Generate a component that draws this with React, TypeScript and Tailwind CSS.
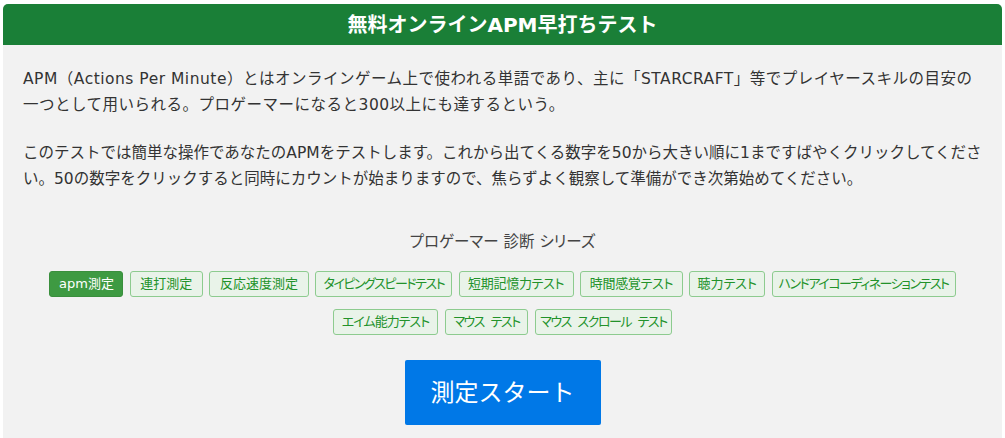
import React from "react";

type Test = { label: string; cls: string };

const row1: Test[] = [
  { label: "apm測定", cls: "w-[74px]" },
  { label: "連打測定", cls: "w-[73px]" },
  { label: "反応速度測定", cls: "w-[100px]" },
  { label: "タイピングスピードテスト", cls: "w-[137px] tracking-[-1.5px]" },
  { label: "短期記憶力テスト", cls: "w-[115px] tracking-[-0.3px]" },
  { label: "時間感覚テスト", cls: "w-[103px] tracking-[-0.3px]" },
  { label: "聴力テスト", cls: "w-[76px]" },
  { label: "ハンドアイコーディネーションテスト", cls: "w-[184px] tracking-[-1.5px]" },
];

const row2: Test[] = [
  { label: "エイム能力テスト", cls: "w-[105px] tracking-[-1px]" },
  { label: "マウス テスト", cls: "w-[83px] tracking-[-1.5px]" },
  { label: "マウス スクロール テスト", cls: "w-[137px] tracking-[-1.5px]" },
];

function TestButton({ test, active }: { test: Test; active?: boolean }) {
  return (
    <button
      className={`${test.cls} h-[26px] shrink-0 whitespace-nowrap rounded-[3px] border text-center text-[13px] leading-[18px] [word-spacing:4px] ${
        active
          ? "border-[#3a8f3d] bg-[#3e9a42] text-white"
          : "border-[#8dcb8f] bg-[#e9f3e9] text-[#22922a]"
      }`}
    >
      {test.label}
    </button>
  );
}

export default function App() {
  return (
    <div
      className="min-h-[438px] bg-white px-[3px] pt-1"
      style={{ fontFamily: '"DejaVu Sans", "Noto Sans CJK JP", sans-serif' }}
    >
      <div className="overflow-hidden rounded-t-[5px] bg-[#f2f2f2] min-h-[434px]">
        <h1 className="flex h-[41px] items-center justify-center bg-[#1a7f37] text-[20px] font-bold text-white">
          無料オンラインAPM早打ちテスト
        </h1>

        <div className="px-5 pt-[21px] text-[15.5px] leading-[26px] text-[#333]">
          <p className="tracking-[0.5px]">
            APM（Actions Per Minute）とはオンラインゲーム上で使われる単語であり、主に「STARCRAFT」等でプレイヤースキルの目安の
            <br />
            一つとして用いられる。プロゲーマーになると300以上にも達するという。
          </p>
          <p className="mt-[22px]">
            このテストでは簡単な操作であなたのAPMをテストします。これから出てくる数字を50から大きい順に1まですばやくクリックしてください。50の数字をクリックすると同時にカウントが始まりますので、焦らずよく観察して準備ができ次第始めてください。
          </p>

          <div className="mt-[37px] text-center text-[#444] [font-feature-settings:'palt']">
            プロゲーマー 診断 シリーズ
          </div>

          <div className="mt-[16px] flex flex-col items-center gap-[12px] [font-feature-settings:'palt']">
            <div className="flex gap-[6.3px]">
              {row1.map((t, i) => (
                <TestButton key={t.label} test={t} active={i === 0} />
              ))}
            </div>
            <div className="flex gap-[7px]">
              {row2.map((t) => (
                <TestButton key={t.label} test={t} />
              ))}
            </div>
          </div>

          <div className="mt-[25px] flex justify-center">
            <button className="h-[65px] w-[196px] rounded-[2px] bg-[#0078e7] text-[24px] text-white">
              測定スタート
            </button>
          </div>
        </div>
      </div>
    </div>
  );
}
